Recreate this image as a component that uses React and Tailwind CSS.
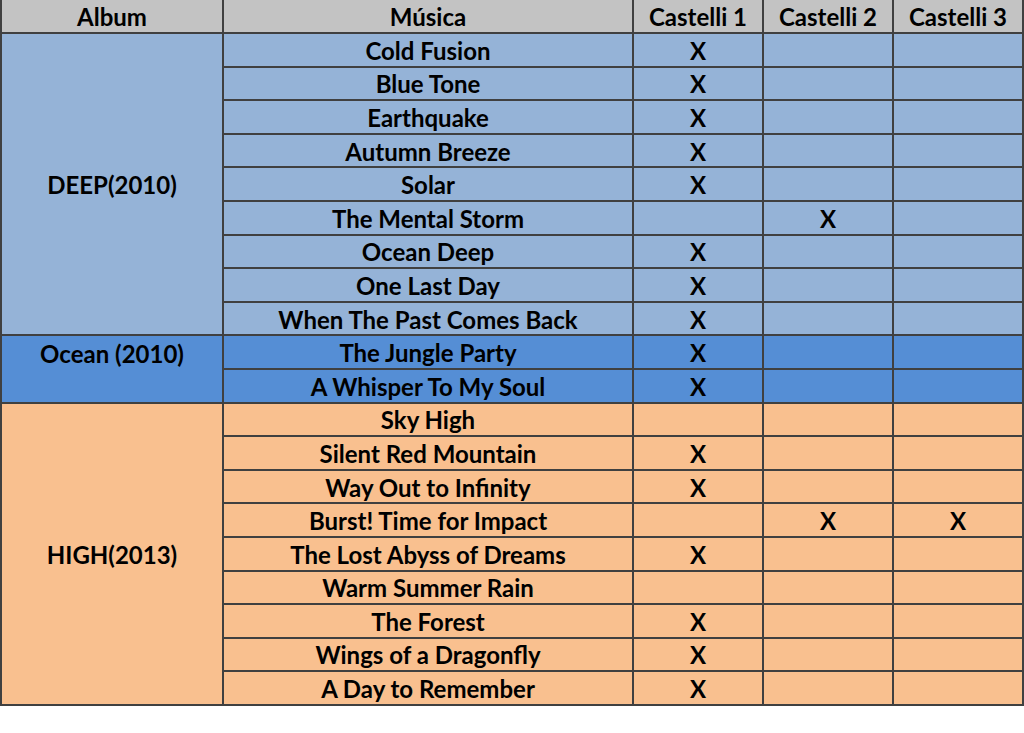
import React from "react";

const LB = "bg-[#95b3d7]";
const MB = "bg-[#558ed5]";
const PE = "bg-[#f9c08f]";

const rows = [
  ["Cold Fusion", 1, 0, 0, LB],
  ["Blue Tone", 1, 0, 0, LB],
  ["Earthquake", 1, 0, 0, LB],
  ["Autumn Breeze", 1, 0, 0, LB],
  ["Solar", 1, 0, 0, LB],
  ["The Mental Storm", 0, 1, 0, LB],
  ["Ocean Deep", 1, 0, 0, LB],
  ["One Last Day", 1, 0, 0, LB],
  ["When The Past Comes Back", 1, 0, 0, LB],
  ["The Jungle Party", 1, 0, 0, MB],
  ["A Whisper To My Soul", 1, 0, 0, MB],
  ["Sky High", 0, 0, 0, PE],
  ["Silent Red Mountain", 1, 0, 0, PE],
  ["Way Out to Infinity", 1, 0, 0, PE],
  ["Burst! Time for Impact", 0, 1, 1, PE],
  ["The Lost Abyss of Dreams", 1, 0, 0, PE],
  ["Warm Summer Rain", 0, 0, 0, PE],
  ["The Forest", 1, 0, 0, PE],
  ["Wings of a Dragonfly", 1, 0, 0, PE],
  ["A Day to Remember", 1, 0, 0, PE],
];

const cell = "border-r-2 border-b-2 border-[#404040] flex items-center justify-center pt-[2px]";

export default function App() {
  return (
    <div className="w-[1024px] h-[733px] bg-white" style={{ fontFamily: "Lato, 'Open Sans', sans-serif" }}>
      <div className="grid grid-cols-[222px_410px_130px_130px_130px] grid-rows-[34px_repeat(20,33.6px)] w-[1024px] border-l-2 border-[#404040] text-[24px] font-bold text-black leading-none">
        <div className={`${cell} bg-[#c3c3c3]`}>Album</div>
        <div className={`${cell} bg-[#c3c3c3]`}>Música</div>
        <div className={`${cell} bg-[#c3c3c3]`}>Castelli 1</div>
        <div className={`${cell} bg-[#c3c3c3]`}>Castelli 2</div>
        <div className={`${cell} bg-[#c3c3c3]`}>Castelli 3</div>

        <div className={`${cell} ${LB} col-start-1 row-start-2 row-span-9`}>DEEP(2010)</div>
        <div className={`border-r-2 border-b-2 border-[#404040] ${MB} col-start-1 row-start-11 row-span-2 flex flex-col`}>
          <div className="h-[33.6px] flex items-center justify-center pt-[2px]">Ocean (2010)</div>
        </div>
        <div className={`${cell} ${PE} col-start-1 row-start-13 row-span-9`}>HIGH(2013)</div>

        {rows.map(([name, a, b, c, bg], i) => (
          <React.Fragment key={name}>
            <div className={`${cell} ${bg} col-start-2`} style={{ gridRowStart: i + 2 }}>{name}</div>
            <div className={`${cell} ${bg} col-start-3`} style={{ gridRowStart: i + 2 }}>{a ? "X" : ""}</div>
            <div className={`${cell} ${bg} col-start-4`} style={{ gridRowStart: i + 2 }}>{b ? "X" : ""}</div>
            <div className={`${cell} ${bg} col-start-5`} style={{ gridRowStart: i + 2 }}>{c ? "X" : ""}</div>
          </React.Fragment>
        ))}
      </div>
    </div>
  );
}
